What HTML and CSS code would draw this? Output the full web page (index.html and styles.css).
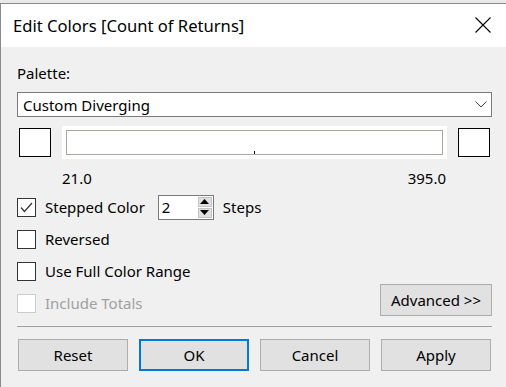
FILE: index.html
```html
<!DOCTYPE html>
<html lang="en">
<head>
  <meta charset="UTF-8">
  <title>Edit Colors</title>
  <link rel="stylesheet" href="styles.css">
</head>
<body>
  <div class="window">
    <div class="titlebar">
      <span class="title">Edit Colors [Count of Returns]</span>
      <svg class="close" width="16" height="16" viewBox="0 0 16 16">
        <path d="M0.5 0.5 L15.5 15.5 M15.5 0.5 L0.5 15.5" stroke="#000" stroke-width="1.1" fill="none"/>
      </svg>
    </div>

    <div class="content">
      <div class="label">Palette:</div>
      <div class="select">
        <span>Custom Diverging</span>
        <svg width="12" height="7" viewBox="0 0 12 7">
          <path d="M0.5 0.5 L6 6 L11.5 0.5" stroke="#444" stroke-width="1" fill="none"/>
        </svg>
      </div>

      <div class="ramp-row">
        <div class="swatch"></div>
        <div class="ramp">
          <div class="ramp-inner"><span class="tick"></span></div>
        </div>
        <div class="swatch"></div>
      </div>
      <div class="range">
        <span>21.0</span>
        <span>395.0</span>
      </div>

      <div class="option">
        <span class="check checked">
          <svg width="13" height="11" viewBox="0 0 13 11">
            <path d="M1 5.5 L4.5 9.5 L12 1" stroke="#333" stroke-width="1.2" fill="none"/>
          </svg>
        </span>
        <span>Stepped Color</span>
        <div class="spin">
          <span class="spin-value">2</span>
          <div class="spin-arrows">
            <span class="arrow"><svg width="9" height="5" viewBox="0 0 9 5"><path d="M0 5 L4.5 0 L9 5 Z" fill="#000"/></svg></span>
            <span class="arrow"><svg width="9" height="5" viewBox="0 0 9 5"><path d="M0 0 L4.5 5 L9 0 Z" fill="#000"/></svg></span>
          </div>
        </div>
        <span>Steps</span>
      </div>
      <div class="option">
        <span class="check"></span>
        <span>Reversed</span>
      </div>
      <div class="option">
        <span class="check"></span>
        <span>Use Full Color Range</span>
      </div>
      <div class="option last">
        <span class="check disabled"></span>
        <span class="muted">Include Totals</span>
        <button class="btn advanced">Advanced &gt;&gt;</button>
      </div>

      <div class="separator"></div>

      <div class="actions">
        <button class="btn">Reset</button>
        <button class="btn primary">OK</button>
        <button class="btn">Cancel</button>
        <button class="btn">Apply</button>
      </div>
    </div>
  </div>
</body>
</html>
```

FILE: styles.css
```css
body {
  margin: 0;
  background: #e9e9e9;
  font-family: "Noto Sans", "Open Sans", sans-serif;
  font-size: 15px;
  color: #000;
}

.window {
  margin-top: 3px;
  height: 384px;
  border-top: 1px solid #8a8a8a;
  border-left: 1px solid #8a8a8a;
  background: #f0f0f0;
  box-sizing: border-box;
}

.titlebar {
  height: 43px;
  background: #fff;
  display: flex;
  align-items: center;
  justify-content: space-between;
  padding: 0 15px 0 12px;
}

.title {
  font-size: 16.6px;
  margin-top: -1px;
}

.close {
  margin-top: -1px;
}

.content {
  padding: 0 14px 0 16px;
}

.label {
  height: 36px;
  padding-top: 16px;
  line-height: 20px;
  box-sizing: border-box;
  margin-bottom: 9px;
}

.select {
  height: 25px;
  border: 1px solid #7a7a7a;
  background: #fff;
  box-sizing: border-box;
  display: flex;
  align-items: center;
  justify-content: space-between;
  padding: 0 4px 0 5px;
}

.ramp-row {
  display: flex;
  align-items: center;
  margin-top: 9px;
  height: 33px;
}

.swatch {
  width: 32px;
  height: 29px;
  border: 1px solid #000;
  background: #fff;
  box-sizing: border-box;
}

.ramp-row .swatch:first-child {
  margin-left: 2px;
}

.ramp {
  width: 385px;
  height: 33px;
  background: #fff;
  margin: 0 11px;
  padding: 4px;
  box-sizing: border-box;
}

.ramp-inner {
  position: relative;
  height: 25px;
  border: 1px solid #aca899;
  box-sizing: border-box;
}

.tick {
  position: absolute;
  left: 187px;
  bottom: 0;
  width: 1px;
  height: 3px;
  background: #000;
}

.range {
  display: flex;
  justify-content: space-between;
  width: 384px;
  margin-left: 45px;
  height: 32px;
  padding-top: 8px;
  line-height: 22px;
  box-sizing: border-box;
}

.option {
  display: flex;
  align-items: center;
  height: 32px;
}

.check {
  width: 19px;
  height: 19px;
  border: 1px solid #333;
  background: #fff;
  box-sizing: border-box;
  margin-right: 9px;
  display: flex;
  align-items: center;
  justify-content: center;
}

.check.disabled {
  border-color: #cccccc;
}

.muted {
  color: #a0a0a0;
}

.spin {
  display: flex;
  align-items: center;
  width: 56px;
  height: 25px;
  border: 1px solid #7a7a7a;
  background: #fff;
  box-sizing: border-box;
  margin: 0 9px 0 13px;
  padding: 0 1px 0 3px;
}

.spin-value {
  flex: 1;
}

.spin-arrows {
  display: flex;
  flex-direction: column;
  gap: 1px;
}

.arrow {
  width: 14px;
  height: 10px;
  background: #e0e0e0;
  border: 1px solid #c4c4c4;
  box-sizing: border-box;
  display: flex;
  align-items: center;
  justify-content: center;
}

.option.last .advanced {
  margin-left: auto;
  margin-top: -6px;
  width: 112px;
}

.btn {
  font-family: inherit;
  font-size: 15px;
  color: #000;
  height: 32px;
  background: #e1e1e1;
  border: 1px solid #adadad;
  padding: 0;
}

.separator {
  height: 1px;
  background: #a0a0a0;
  margin-top: 7px;
}

.actions {
  display: flex;
  gap: 11px;
  margin-top: 12px;
  padding-left: 1px;
}

.actions .btn {
  width: 110px;
}

.btn.primary {
  border: 2px solid #0078d7;
}
```
